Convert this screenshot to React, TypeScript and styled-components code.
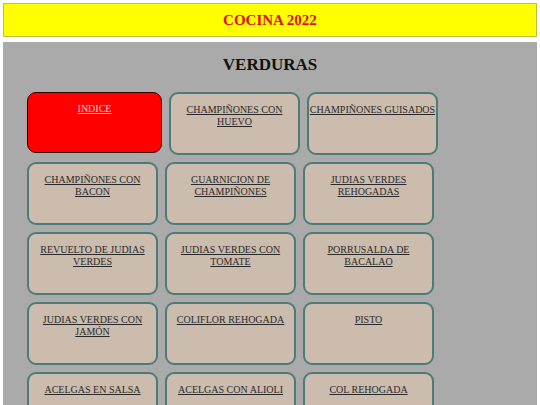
import React from 'react';
import styled, { createGlobalStyle } from 'styled-components';

const GlobalStyle = createGlobalStyle`
  html, body {
    margin: 0;
    padding: 0;
    background: #ffffff;
  }
  body {
    padding: 3px;
    font-family: "Liberation Serif", "Times New Roman", serif;
  }
`;

const Header = styled.header`
  background: #ffff00;
  border: 1px solid #bdbd4a;
  height: 32px;
  display: flex;
  align-items: center;
  justify-content: center;
`;

const HeaderTitle = styled.h1`
  margin: 0;
  font-family: "Liberation Serif", serif;
  font-size: 15px;
  font-weight: bold;
  color: #e01010;
`;

const Main = styled.main`
  margin-top: 5px;
  background: #aaaaaa;
  padding: 13px 24px 24px;
  min-height: 400px;
`;

const SectionTitle = styled.h2`
  margin: 0 0 17px;
  text-align: center;
  font-family: "Liberation Serif", serif;
  font-size: 17px;
  font-weight: bold;
  color: #111;
  line-height: 20px;
`;

const Grid = styled.div`
  display: flex;
  flex-direction: column;
  gap: 7px;
  width: 420px;
`;

const Row = styled.div`
  display: flex;
  gap: 7px;
`;

const Card = styled.a<{ $active?: boolean; $wide?: boolean; $nowrap?: boolean }>`
  box-sizing: border-box;
  width: ${(p) => (p.$wide ? '135px' : '131px')};
  height: ${(p) => (p.$wide ? '61px' : '63px')};
  border: ${(p) => (p.$active ? '1.5px solid #300' : '2px solid #4d7b79')};
  border-radius: 9px;
  background: ${(p) => (p.$active ? '#ff0000' : '#ccbcad')};
  padding: 10px 0 0;
  text-align: center;
  font-family: "Liberation Serif", "Times New Roman", serif;
  font-size: 10px;
  line-height: 12px;
  color: ${(p) => (p.$active ? '#ffd0d0' : '#2a2a2a')};
  text-decoration: underline;
  white-space: ${(p) => (p.$nowrap ? 'nowrap' : 'normal')};
`;

const rows: string[][] = [
  ['CHAMPIÑONES CON BACON', 'GUARNICION DE CHAMPIÑONES', 'JUDIAS VERDES REHOGADAS'],
  ['REVUELTO DE JUDIAS VERDES', 'JUDIAS VERDES CON TOMATE', 'PORRUSALDA DE BACALAO'],
  ['JUDIAS VERDES CON JAMÓN', 'COLIFLOR REHOGADA', 'PISTO'],
  ['ACELGAS EN SALSA', 'ACELGAS CON ALIOLI', 'COL REHOGADA'],
];

const App: React.FC = () => {
  return (
    <>
      <GlobalStyle />
      <Header>
        <HeaderTitle>COCINA 2022</HeaderTitle>
      </Header>
      <Main>
        <SectionTitle>VERDURAS</SectionTitle>
        <Grid>
          <Row>
            <Card $active $wide>INDICE</Card>
            <Card>CHAMPIÑONES CON HUEVO</Card>
            <Card $nowrap>CHAMPIÑONES GUISADOS</Card>
          </Row>
          {rows.map((r, i) => (
            <Row key={i}>
              {r.map((name) => (
                <Card key={name}>{name}</Card>
              ))}
            </Row>
          ))}
        </Grid>
      </Main>
    </>
  );
};

export default App;
